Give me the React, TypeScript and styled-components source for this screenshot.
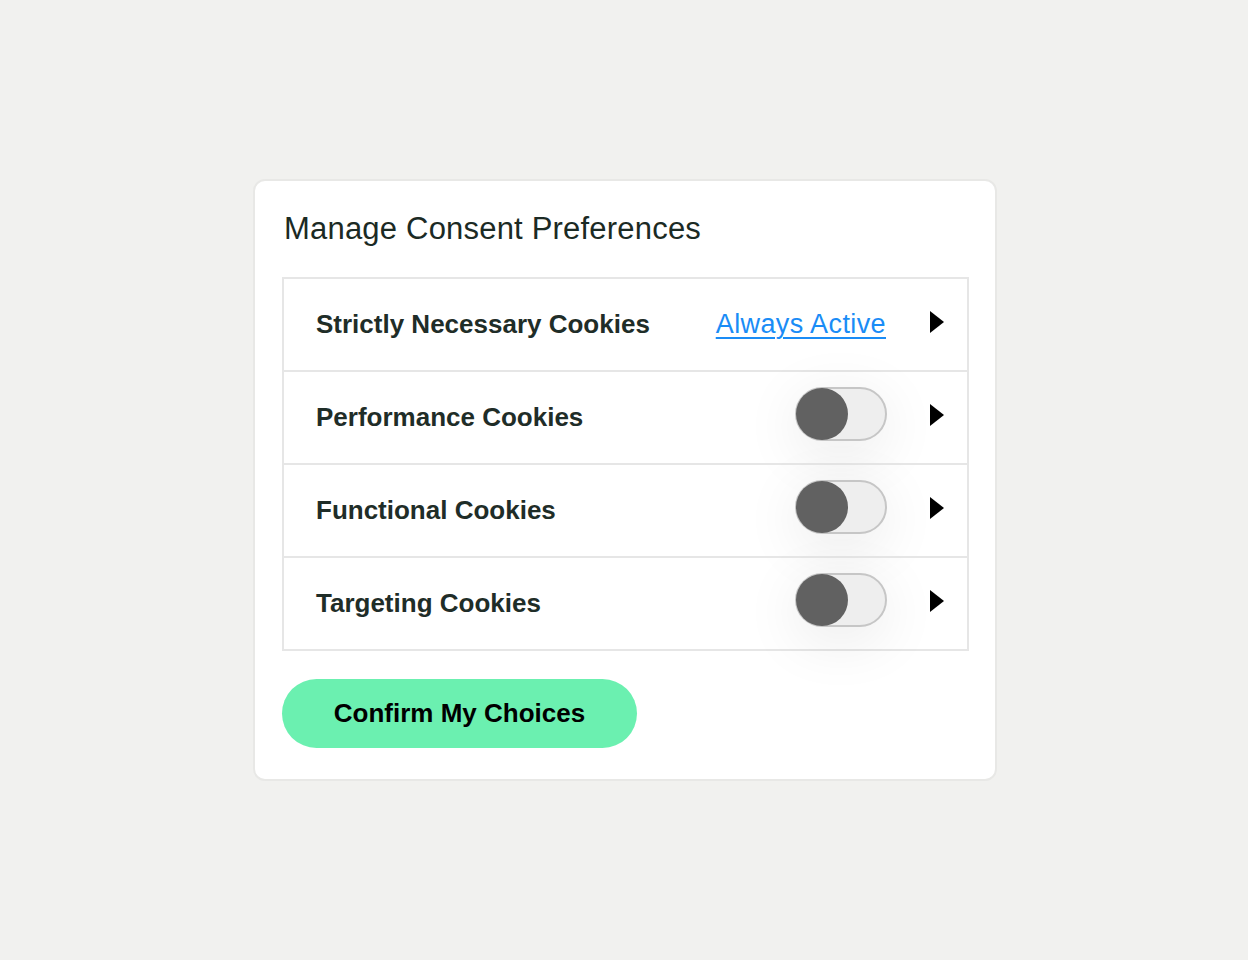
import * as React from "react";
import styled, { createGlobalStyle } from "styled-components";

const GlobalStyle = createGlobalStyle`
  html, body {
    margin: 0;
    padding: 0;
    background: #f1f1ef;
    font-family: "Liberation Sans", Arial, sans-serif;
  }
`;

const Page = styled.div`
  width: 1248px;
  height: 960px;
  display: flex;
  justify-content: center;
  padding-top: 179px;
  box-sizing: border-box;
`;

const Card = styled.div`
  width: 744px;
  height: 602px;
  box-sizing: border-box;
  margin-left: 2px;
  background: #ffffff;
  border: 2px solid #e8e8e6;
  border-radius: 12px;
  padding: 28px 26px 30px 27px;
  display: flex;
  flex-direction: column;
  align-items: flex-start;
`;

const Title = styled.h2`
  margin: 0 0 28px 2px;
  font-size: 31px;
  line-height: 40px;
  font-weight: 400;
  letter-spacing: 0.2px;
  color: #1b2a24;
`;

const List = styled.div`
  width: 100%;
  box-sizing: border-box;
  border: 2px solid #e6e6e6;
  display: flex;
  flex-direction: column;
`;

const Row = styled.div<{ $first?: boolean }>`
  height: 91px;
  display: flex;
  align-items: center;
  padding: 0 23px 0 32px;
  border-top: ${(p) => (p.$first ? "none" : "2px solid #e6e6e6")};
`;

const Label = styled.span`
  flex: 1;
  font-size: 26px;
  font-weight: 700;
  color: #1f2d28;
`;

const AlwaysActive = styled.a`
  font-size: 27px;
  letter-spacing: 0.4px;
  color: #1a8cf6;
  text-decoration: underline;
  text-underline-offset: 4px;
  text-decoration-thickness: 2px;
  margin-right: 44px;
  cursor: pointer;
`;

const Toggle = styled.div`
  width: 92px;
  height: 54px;
  box-sizing: border-box;
  border-radius: 27px;
  background: #eeeeee;
  border: 2px solid #c6c6c6;
  box-shadow: 0 12px 60px rgba(0, 0, 0, 0.09);
  margin: 0 43px 8px 0;
  display: flex;
  align-items: center;
`;

const Knob = styled.span`
  width: 52px;
  height: 52px;
  margin-left: -1px;
  border-radius: 50%;
  background: #616161;
`;

const Arrow = styled.span`
  width: 0;
  height: 0;
  margin-bottom: 5px;
  border-top: 11px solid transparent;
  border-bottom: 11px solid transparent;
  border-left: 14px solid #000000;
`;

const ConfirmButton = styled.button`
  margin-top: 28px;
  width: 355px;
  height: 69px;
  border: none;
  border-radius: 35px;
  background: #6bf0b0;
  color: #000000;
  font-family: "Liberation Sans", Arial, sans-serif;
  font-size: 26px;
  font-weight: 700;
  cursor: pointer;
`;

const categories = ["Performance Cookies", "Functional Cookies", "Targeting Cookies"];

const App = () => {
  return (
    <>
      <GlobalStyle />
      <Page>
        <Card>
          <Title>Manage Consent Preferences</Title>
          <List>
            <Row $first>
              <Label>Strictly Necessary Cookies</Label>
              <AlwaysActive>Always Active</AlwaysActive>
              <Arrow />
            </Row>
            {categories.map((name) => (
              <Row key={name}>
                <Label>{name}</Label>
                <Toggle>
                  <Knob />
                </Toggle>
                <Arrow />
              </Row>
            ))}
          </List>
          <ConfirmButton>Confirm My Choices</ConfirmButton>
        </Card>
      </Page>
    </>
  );
};

export default App;
